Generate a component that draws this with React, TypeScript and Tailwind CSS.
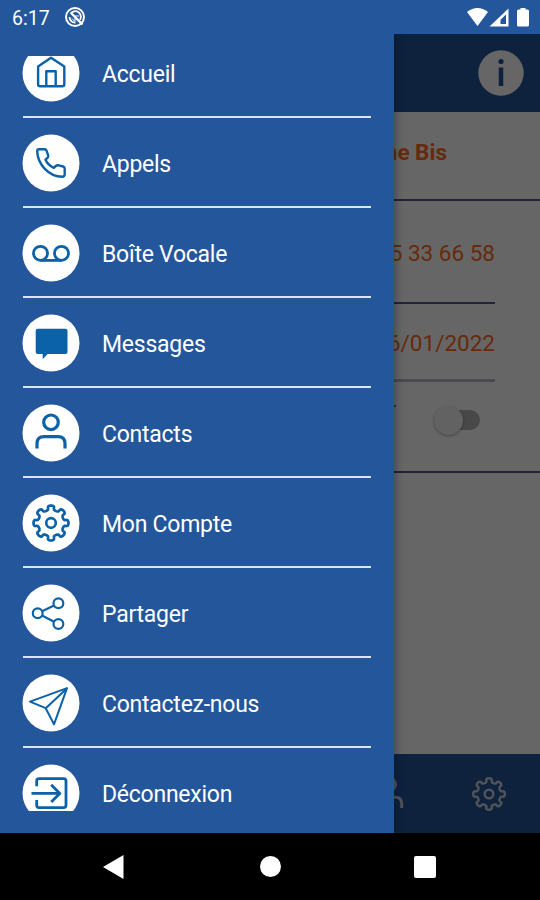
import type { ReactNode } from 'react';

// eight-tooth cog outline centred on 0,0
const gearPath = (() => {
    const points: string[] = [];
    for (let i = 0; i < 240; i++) {
        const a = (i / 240) * Math.PI * 2;
        const r = 15.2 + 2.3 * Math.cos(a * 8);
        // widen the teeth towards their tips
        const t = a + 0.06 * Math.sin(a * 16);
        points.push(`${(r * Math.cos(t)).toFixed(2)} ${(r * Math.sin(t)).toFixed(2)}`);
    }
    return `M${points.join('L')}Z`;
})();

function Gear() {
    return (
        <g strokeWidth="2.7">
            <path d={gearPath} />
            <circle r="4.8" />
        </g>
    );
}

function Person() {
    return (
        <g strokeWidth="3.2">
            <circle cy="-10.7" r="7.3" />
            <path d="M-14 15.5V10.5Q-14 3.6-7 3.6H7Q14 3.6 14 10.5V15.5" />
        </g>
    );
}

const items: { label: string; icon: ReactNode }[] = [
    {
        label: 'Accueil',
        icon: (
            <g strokeWidth="2.4">
                <path d="M0-15.2L-12.9-6.6V11.2Q-12.9 13.2-10.9 13.2H11.3Q13.3 13.2 13.3 11.2V-6.6Z" />
                <path d="M-4.7 13V-1.7H4.7V13" />
            </g>
        ),
    },
    {
        label: 'Appels',
        icon: (
            <path
                strokeWidth="2.4"
                d="M-12-13.7H-6.5Q-5-13.7-4.4-12.2L-2.8-7.6Q-2.4-6.2-3.5-5.2L-5.5-3.3C-4.2-.2-.7 3.1 2.8 4.9L4.9 3Q6 2 7.5 2.3L12.1 3.5Q13.7 4 13.7 5.6V11.3Q13.7 13.7 11.2 13.7C-2.5 13.4-13.2 1.4-13.8-11.6Q-13.8-13.7-12-13.7Z"
            />
        ),
    },
    {
        label: 'Boîte Vocale',
        icon: (
            <g strokeWidth="2.8">
                <circle cx="-10.5" cy="0.3" r="7" />
                <circle cx="10.5" cy="0.3" r="7" />
                <path d="M-10.5 7.4H10.5" />
            </g>
        ),
    },
    {
        label: 'Messages',
        icon: (
            <path
                fill="currentColor"
                stroke="none"
                d="M-13.3-14.3H14.5Q16.5-14.3 16.5-12.3V9Q16.5 11 14.5 11H-3.3L-8.3 16.3V11H-13.3Q-15.3 11-15.3 9V-12.3Q-15.3-14.3-13.3-14.3Z"
            />
        ),
    },
    { label: 'Contacts', icon: <Person /> },
    { label: 'Mon Compte', icon: <Gear /> },
    {
        label: 'Partager',
        icon: (
            <g strokeWidth="2.2">
                <circle cx="-13.3" cy="0.3" r="4.9" />
                <circle cx="7.4" cy="-9.7" r="4.9" />
                <circle cx="7.4" cy="11" r="4.9" />
                <path d="M-8.9-1.8L3-7.6M-8.9 2.5L3 8.8" />
            </g>
        ),
    },
    {
        label: 'Contactez-nous',
        icon: (
            <g strokeWidth="2">
                <path d="M16-14.9L-21-1.4L-5.3 5.2L3 21.3Z" />
                <path d="M-5.3 5.2L14.5-13.3M-3.8 4L16-14.9" />
            </g>
        ),
    },
    {
        label: 'Déconnexion',
        icon: (
            <g strokeWidth="2.8">
                <path d="M-14.3-6.7V-12Q-14.3-14.3-12-14.3H12.6Q15-14.3 15-12V12.3Q15 14.6 12.6 14.6H-12Q-14.3 14.6-14.3 12.3V7" />
                <path d="M-19.5.4H8.5M.2-8.2L8.8.4L.2 9" />
            </g>
        ),
    },
];

function StatusBar() {
    return (
        <div className="absolute inset-x-0 top-0 flex h-[34px] items-center bg-[#24569b] pl-[12px] pr-[10px] text-white">
            <span className="pt-[3px] text-[19.5px] leading-none">6:17</span>
            <svg className="ml-[14px]" width="22" height="22" viewBox="-11 -11 22 22" fill="none" stroke="currentColor">
                <circle r="9" strokeWidth="2" />
                <path d="M-4.5-3.2A5.5 5.5 0 0 1 5 2.8M-5.5 0A5.5 5.5 0 0 0 .5 5.5" strokeWidth="1.8" />
                <path d="M-3.5-3.5L7.5 7.5" strokeWidth="2.4" />
                <path d="M-3 1.5L0 4.5V-1H4" strokeWidth="1" />
            </svg>
            <svg className="ml-auto" width="64" height="22" viewBox="466 6 64 22" fill="currentColor">
                <path d="M467 12Q477.5 4 488 12L477.5 26Z" />
                <path fillRule="evenodd" d="M489.5 26.5L508.5 8.5V26.5ZM500.5 24H506V14.5L500.5 19.8Z" />
                <path d="M520.5 8H525.5V9.5H527.5Q529 9.5 529 11V25Q529 26.5 527.5 26.5H518.5Q517 26.5 517 25V11Q517 9.5 518.5 9.5H520.5Z" />
            </svg>
        </div>
    );
}

function AccountScreen() {
    return (
        <div className="flex h-full flex-col bg-white pt-[34px]">
            <header className="flex h-[78px] items-center justify-end bg-[#24569b] pr-[16px]">
                <svg width="46" height="46" viewBox="-23 -23 46 46">
                    <circle r="22.7" fill="#fff" />
                    <circle cy="-11.5" r="2.6" fill="#24569b" />
                    <path d="M0-5.5V13" stroke="#24569b" strokeWidth="4.5" />
                </svg>
            </header>
            <main className="flex flex-1 flex-col text-right text-[22.5px] leading-none text-[#ff6a20]">
                <div className="flex h-[89px] items-center justify-end border-b-2 border-[#565b90] pr-[93px] pb-[7px] font-bold">
                    ne Bis
                </div>
                <div className="mr-[45px] flex h-[103px] items-center justify-end border-b-2 border-[#565b90] pt-[4px]">
                    5 33 66 58
                </div>
                <div className="mr-[45px] flex h-[78px] items-center justify-end border-b-[3px] border-[#bbb9c8] pt-[4px]">
                    6/01/2022
                </div>
                <div className="flex h-[91px] items-center justify-end border-b-2 border-[#565b90] pr-[60px] pb-[13px]">
                    <div className="mr-[40px] mb-[28px] size-[2px] bg-[#7b7b80]" />
                    <div className="flex h-[20px] w-[44px] items-center rounded-full bg-[#b3b3b3]">
                        <div className="-ml-[2px] size-[29px] shrink-0 rounded-full bg-[#f4f4f4] shadow-[0_1px_3px_rgba(0,0,0,0.35)]" />
                    </div>
                </div>
            </main>
            <footer className="flex h-[79px] items-center justify-end bg-[#24569b] text-[#c8d0dc]">
                <svg width="38" height="38" viewBox="-21 -21 42 42" fill="none" stroke="currentColor">
                    <Person />
                </svg>
                <svg className="ml-[62px] mr-[32px]" width="38" height="38" viewBox="-21 -21 42 42" fill="none" stroke="currentColor">
                    <Gear />
                </svg>
            </footer>
        </div>
    );
}

function Drawer() {
    return (
        <nav className="absolute inset-y-0 left-0 w-[394px] bg-[#24569b] pt-[56px] shadow-[2px_0_8px_rgba(0,0,0,0.3)]">
            <ul className="h-[755px] overflow-hidden pl-[22px] pr-[23px]">
                {items.map((item) => (
                    <li key={item.label} className="group flex h-[90px] flex-col text-white first:-mt-[28px]">
                        <div className="flex flex-1 items-center pt-[1px]">
                            <svg
                                className="size-[58px] shrink-0 text-[#0b62a8]"
                                viewBox="-29 -29 58 58"
                                fill="none"
                                stroke="currentColor"
                                strokeLinejoin="round"
                            >
                                <circle r="28.5" fill="#fff" stroke="none" />
                                {item.icon}
                            </svg>
                            <span className="ml-[22px] pt-[4px] text-[23px] leading-none tracking-[-0.25px]">
                                {item.label}
                            </span>
                        </div>
                        <div className="ml-[1px] h-[2px] bg-[#dce4f5] group-last:invisible" />
                    </li>
                ))}
            </ul>
        </nav>
    );
}

function SystemNav() {
    return (
        <div className="flex h-[67px] items-center bg-black pl-[103px] text-white">
            <svg width="21" height="24" viewBox="0 0 21 24" fill="currentColor">
                <path d="M0 12L20.5 0V24Z" />
            </svg>
            <div className="ml-[136px] size-[21px] rounded-full bg-white" />
            <div className="ml-[133px] size-[22px] rounded-[2px] bg-white" />
        </div>
    );
}

export default function App() {
    return (
        <div className="h-[900px] w-[540px] overflow-hidden bg-black font-[Roboto,sans-serif]">
            <div className="relative h-[833px]">
                <AccountScreen />
                <div className="absolute inset-0 bg-black/60" />
                <Drawer />
                <StatusBar />
            </div>
            <SystemNav />
        </div>
    );
}
